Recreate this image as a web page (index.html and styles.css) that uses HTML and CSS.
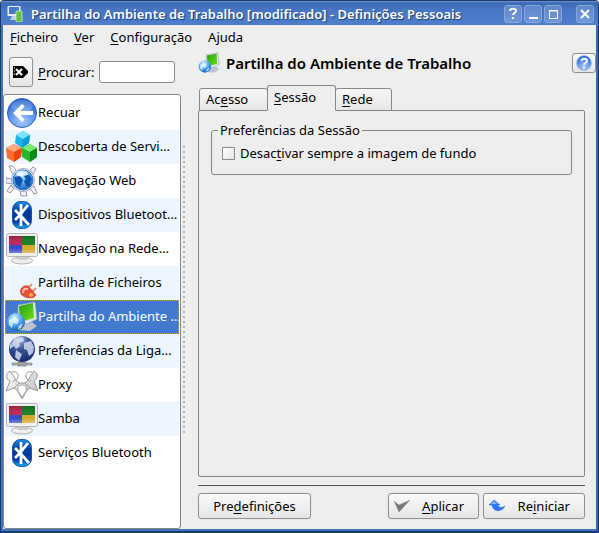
FILE: index.html
```html
<!DOCTYPE html>
<html lang="pt">
<head>
<meta charset="utf-8">
<title>Partilha do Ambiente de Trabalho - Definições Pessoais</title>
<link rel="stylesheet" href="styles.css">
</head>
<body>
<svg class="defs" aria-hidden="true">
  <defs>
    <radialGradient id="blue" cx=".5" cy=".8" r=".75"><stop offset="0" stop-color="#a4caff"/><stop offset=".6" stop-color="#5b93ec"/><stop offset="1" stop-color="#2460cc"/></radialGradient>
    <linearGradient id="bt" x1="0" y1="0" x2="0" y2="1"><stop offset="0" stop-color="#1c8fe8"/><stop offset=".35" stop-color="#003a9c"/><stop offset=".75" stop-color="#0039a0"/><stop offset="1" stop-color="#16b4f6"/></linearGradient>
    <linearGradient id="green" x1="0" y1="0" x2="1" y2="1"><stop offset="0" stop-color="#2a9c10"/><stop offset="1" stop-color="#6ee31c"/></linearGradient>
    <radialGradient id="globe" cx=".4" cy=".25" r=".8"><stop offset="0" stop-color="#d5f0ff"/><stop offset=".5" stop-color="#55aaf0"/><stop offset="1" stop-color="#1557b5"/></radialGradient>
    <radialGradient id="dark" cx=".4" cy=".15" r=".9"><stop offset="0" stop-color="#a9b8dd"/><stop offset=".4" stop-color="#3c5498"/><stop offset="1" stop-color="#132a6c"/></radialGradient>
    <linearGradient id="silver" x1="0" y1="0" x2="1" y2="1"><stop offset="0" stop-color="#fff"/><stop offset="1" stop-color="#b9b9c0"/></linearGradient>
    <linearGradient id="shade" x1="0" y1="0" x2="0" y2="1"><stop offset="0" stop-color="#000" stop-opacity=".2"/><stop offset=".7" stop-color="#fff" stop-opacity="0"/><stop offset="1" stop-color="#fff" stop-opacity=".3"/></linearGradient>
    <symbol id="i-back" viewBox="0 0 32 32"><circle cx="16" cy="16" r="14.5" fill="url(#blue)" stroke="#3162ba"/><ellipse cx="16" cy="9" rx="11" ry="6" fill="#fff" opacity=".18"/><path d="M16 7 7 16l9 9 2.600-2.600-4.300-4.400H27v-4H14.300l4.300-4.400z" fill="#fff"/></symbol>
    <symbol id="i-cubes" viewBox="0 0 32 32"><path d="m17 0 7 4-1 8-7 5-7-5 1-8z" fill="#1fb3e8"/><path d="m17 0 7 4-7 4-7-4z" fill="#7be3ff"/><path d="m17 8 7-4-1 8-7 5z" fill="#079bd8"/><path d="m8 13 8 4-1 9-7 5-7-4-1-10z" fill="#ff6c2c"/><path d="m8 13 8 4-8 4-8-4z" fill="#ffaa7c"/><path d="m8 21 8-4-1 9-7 5z" fill="#ea4704"/><path d="m24 13 7 4v9l-7 5-8-5V17z" fill="#22b82c"/><path d="m24 13 7 4-7 4-8-4z" fill="#79ea72"/><path d="m24 21 7-4v9l-7 5z" fill="#078b13"/></symbol>
    <symbol id="i-web" viewBox="0 0 32 32">
      <g fill="#eceef4" stroke="#8b8f9e" stroke-width=".9"><path d="M3 1c5-1 7 3 7 6l-3 3c-1-3-3-5-3-7z"/><path d="m0 13 6 1v5l-6-1zM5 20l3 4-4 4-3-2zM14 26h6l1 5h-6zM24 23l4-2 3 7-3 1zM24 5l3-3 3 2-3 5z"/></g>
      <circle cx="17" cy="15" r="11.500" fill="#fff" stroke="#a1a8b8"/><circle cx="17" cy="15" r="10" fill="url(#globe)" stroke="#2f73c8"/><path d="m8 12 6-1 3 4-3 7-4-3zm9-2h6l3 4-2 3 0 4-4 0-2-5 2-2z" fill="#0b54ad"/><ellipse cx="16" cy="8.500" rx="6" ry="3" fill="#fff" opacity=".65"/></symbol>
    <symbol id="i-bt" viewBox="0 0 32 32"><rect x="6.500" y="2.500" width="19" height="27" rx="8" fill="url(#bt)" stroke="#1553ad"/><path d="M15 5v22M22 6 14 16l9 10M9 11l5 5-5 5" fill="none" stroke="#fff" stroke-width="2.800"/></symbol>
    <symbol id="i-screen" viewBox="0 0 32 32"><ellipse cx="16" cy="27.500" rx="10.500" ry="3.500" fill="#eee" stroke="#b0b0b0"/><path d="M12 22h9l1 5H11z" fill="#ccc"/><rect x=".5" y=".5" width="31" height="23" rx="2" fill="#efefef" stroke="#b5b5b5"/><path d="M3 3h13v9H3z" fill="#bd2753"/><path d="M16 3h13v9H16z" fill="#168023"/><path d="M3 12h13v8H3z" fill="#3548ca"/><path d="M16 12h13v8H16z" fill="#d4a72a"/><path d="M3 3h26v17H3z" fill="url(#shade)"/></symbol>
    <symbol id="i-plug" viewBox="0 0 32 32"><path d="m22 21 4-4m0 8 4-4" stroke="#e09078" stroke-width="2"/><path d="M15 27c-2-5 2-9 7-8l8 9c-2 4-11 4-15-1z" fill="#e65238" stroke="#c43a26" stroke-width=".7"/><path d="M17 26c0-4 2-5 5-4" fill="none" stroke="#ffc1af" stroke-width="2"/><circle cx="25" cy="28" r="2" fill="#f3b33f"/></symbol>
    <symbol id="i-share" viewBox="0 0 32 32"><path d="m11 23 15-2 5 4-7 5-11-1z" fill="#b9c3d3"/><path d="m12 4 17-3 2 17-10 5-9-3z" fill="#dce5ea" stroke="#8fa4ae" stroke-width=".7"/><path d="m13 5 14-3 1 15-14 4z" fill="url(#green)"/><circle cx="10" cy="21" r="9" fill="url(#globe)"/><path d="m3 19 6-3 4 3-2 4-4-1-1 5-3-3zm10 6 4-3-2 5-3 2z" fill="#edfaff" opacity=".75"/></symbol>
    <symbol id="i-network" viewBox="0 0 32 32"><path d="M6 28h20v2H6zM12 27h8v4h-8z" fill="#bbb" stroke="#6f6f6f" stroke-width=".6"/><circle cx="16" cy="14" r="13" fill="url(#dark)"/><path d="m4 10 5-7 8-1 1 4-5 2 1 3-4 3-2-3-4 3zm14-2 7-2 3 6-1 6-4 3-2-6-3-1zM10 15l6 4-3 7-4-4z" fill="#dce5f6" opacity=".8"/></symbol>
    <symbol id="i-proxy" viewBox="0 0 32 32"><path d="M4 2C-1 5 0 10 4 12L0 22l8-3 3 2 5 9 5-9 3-2 8 3-4-10c4-2 5-7 0-10l-6 9-3 3h-6l-3-3z" fill="url(#silver)" stroke="#97979d"/><path d="M6 3c8-2 8 8 1 9M26 3c-8-2-8 8-1 9M8 19l5-5m11 5-5-5" fill="none" stroke="#97979d"/><path d="m12 17 3-1h2l3 1v5l-4 6-4-6z" fill="#fff" stroke="#999" stroke-width=".7"/></symbol>
  </defs>
</svg>
<div class="window">
  <header class="titlebar">
    <svg class="icon16" viewBox="0 0 16 17"><rect x=".5" y="1" width="13" height="10" rx="1" fill="#e7edf6"/><path d="M2 2h10v7H2z" fill="#427cc5"/><path d="M5 11h5l2 4H3z" fill="#c3ccda"/><rect x="9" y="6" width="6" height="11" rx="1" fill="#63bd45" stroke="#d8efce" stroke-width=".8"/></svg>
    <h1>Partilha do Ambiente de Trabalho [modificado] - Definições Pessoais</h1>
    <div class="controls">
      <button aria-label="Ajuda da janela"><svg viewBox="0 0 16 16"><path d="M5 5c0-3 6-3 6 0 0 2-3 2-3 4m0 2v2" fill="none" stroke="#fff" stroke-width="2"/></svg></button>
      <button aria-label="Minimizar"><svg viewBox="0 0 16 16"><path d="M4 12h9" stroke="#fff" stroke-width="2"/></svg></button>
      <button aria-label="Maximizar"><svg viewBox="0 0 16 16"><path d="M4.500 4.500h8v8h-8zM4 5h9" fill="none" stroke="#fff"/></svg></button>
      <button class="close" aria-label="Fechar"><svg viewBox="0 0 16 16"><path d="m4 4 8 8m0-8-8 8" stroke="#fff" stroke-width="2"/></svg></button>
    </div>
  </header>
  <nav class="menu"><a href="#"><u>F</u>icheiro</a><a href="#"><u>V</u>er</a><a href="#"><u>C</u>onfiguração</a><a href="#">Ajuda</a></nav>
  <main class="content">
    <aside class="sidebar">
      <div class="search">
        <button class="button clear" aria-label="Limpar"><svg viewBox="0 0 16 12"><path d="M0 0h10l5 5v2l-5 5H0z"/><path d="m3 3 6 6m0-6L3 9" stroke="#fff" stroke-width="2"/><path d="M1 2h1M1 5h1M1 8h1" stroke="#fff"/></svg></button>
        <label for="search"><u>P</u>rocurar:</label>
        <input id="search" type="text">
      </div>
      <ul class="list">
        <li><a href="#"><svg><use href="#i-back"/></svg><span>Recuar</span></a></li>
        <li><a href="#"><svg><use href="#i-cubes"/></svg><span>Descoberta de Servi…</span></a></li>
        <li><a href="#"><svg><use href="#i-web"/></svg><span>Navegação Web</span></a></li>
        <li><a href="#"><svg><use href="#i-bt"/></svg><span>Dispositivos Bluetoot…</span></a></li>
        <li><a href="#"><svg><use href="#i-screen"/></svg><span>Navegação na Rede…</span></a></li>
        <li><a href="#"><svg><use href="#i-plug"/></svg><span>Partilha de Ficheiros</span></a></li>
        <li class="selected"><a href="#"><svg><use href="#i-share"/></svg><span>Partilha do Ambiente …</span></a></li>
        <li><a href="#"><svg><use href="#i-network"/></svg><span>Preferências da Liga…</span></a></li>
        <li><a href="#"><svg><use href="#i-proxy"/></svg><span>Proxy</span></a></li>
        <li><a href="#"><svg><use href="#i-screen"/></svg><span>Samba</span></a></li>
        <li><a href="#"><svg><use href="#i-bt"/></svg><span>Serviços Bluetooth</span></a></li>
      </ul>
    </aside>
    <div class="splitter"></div>
    <section class="module">
      <div class="heading">
        <svg><use href="#i-share"/></svg>
        <h2>Partilha do Ambiente de Trabalho</h2>
        <button class="button help" aria-label="Ajuda"><svg viewBox="0 0 16 16"><circle cx="8" cy="8" r="7.500" fill="url(#blue)" stroke="#a9c3ee"/><path d="M5.500 6c0-3 5.500-3 5.500 0 0 2-3 1.500-3 4m0 1.500v2" fill="none" stroke="#fff" stroke-width="1.800"/></svg></button>
      </div>
      <div class="tabs" role="tablist">
        <button role="tab" class="tab">Ac<u>e</u>sso</button>
        <button role="tab" class="tab active" aria-selected="true"><u>S</u>essão</button>
        <button role="tab" class="tab last"><u>R</u>ede</button>
      </div>
      <div class="panel" role="tabpanel">
        <fieldset>
          <legend>Preferências da Sessão</legend>
          <label class="check"><input type="checkbox"><span>Desac<u>t</u>ivar sempre a imagem de fundo</span></label>
        </fieldset>
      </div>
      <footer class="actions">
        <button class="button defaults"><span>Pre<u>d</u>efinições</span></button>
        <button class="button apply"><svg viewBox="0 0 16 16"><path d="m0 3 5 4 11-5L5 14z" fill="#777" stroke="#999" stroke-width=".5"/></svg><span><u>A</u>plicar</span></button>
        <button class="button reset"><svg viewBox="0 0 16 16"><path d="M5 2 0 7h3c1 7 9 8 13 1-3 2-7 2-7-1h2z" fill="#2a78ff" stroke="#1760df" stroke-width=".5"/><path d="M5 3 2 6h6z" fill="#8ab8ff"/></svg><span>Re<u>i</u>niciar</span></button>
      </footer>
    </section>
  </main>
</div>
</body>
</html>
```

FILE: styles.css
```css
* { box-sizing: border-box; }
body { margin: 0; background: #fff; color: #000; font: 13px/18px "Noto Sans", sans-serif; }
button, input { font: inherit; color: inherit; margin: 0; padding: 0; }
a { color: inherit; text-decoration: none; }
u { text-underline-offset: 2px; text-decoration-thickness: 1px; text-decoration-skip-ink: none; }
svg { display: block; flex: none; }
.defs { position: absolute; width: 0; height: 0; }
.window {
  display: flex; flex-direction: column; min-height: 100vh;
  background: #eee; border: 1px solid #1d3869; border-width: 1px 1px 2px;
  border-radius: 4px 4px 0 0; box-shadow: inset 2px 0 #4474c0, inset -2px 0 #3667b5, inset 0 -2px #4474c0;
}
.titlebar {
  display: flex; align-items: center; height: 24px; padding: 1px 4px 0 6px;
  border-radius: 3px 3px 0 0; color: #fff;
  background: linear-gradient(#7398d4, #3c69b2 2px, #4676c3 8px, #4f7fca);
}
.icon16 { width: 16px; height: 17px; }
h1 { margin: 0 0 0 8px; font-size: 13px; line-height: 18px; font-weight: 600; flex: 1; white-space: nowrap; text-shadow: 1px 1px 1px #1b3c75; }
.controls { display: flex; gap: 2px; }
.controls button { width: 18px; height: 18px; border: 1px solid #88a7da; border-radius: 3px; background: linear-gradient(#5f87c9, #6f97d9); }
.controls svg { width: 16px; height: 16px; }
.controls .close { margin-left: 12px; }
.menu { display: flex; gap: 16px; height: 25px; padding: 3px 9px; }
.content { display: flex; flex: 1; padding: 0 2px 2px; }
.sidebar { display: flex; flex-direction: column; width: 178px; }
.search { display: flex; align-items: center; gap: 5px; height: 44px; padding: 3px 6px 3px; }
.search input { flex: 1; min-width: 0; height: 22px; padding: 0 4px; border: 1px solid #888; border-radius: 3px; background: #fff; }
.button {
  display: flex; align-items: center; border: 1px solid #919191; border-radius: 3px;
  background: linear-gradient(#fafafa, #e5e5e5); box-shadow: 0 0 1px #c4c4c4;
}
.clear { width: 24px; height: 30px; justify-content: center; }
.clear svg { width: 16px; height: 12px; }
.list { flex: 1; margin: 0; padding: 1px; list-style: none; background: #fff; border: 1px solid #858585; border-radius: 3px; }
.list li { height: 34px; }
.list li:nth-child(even) { background: #edf5ff; }
.list a { display: flex; align-items: center; height: 34px; padding: 0 1px; white-space: nowrap; }
.list span { padding-bottom: 2px; }
.list svg { width: 32px; height: 32px; }
.list .selected { background: #417acd; color: #fff; }
.selected a { outline: 1px dotted #d89b44; outline-offset: -1px; }
.splitter {
  align-self: center; width: 2px; height: 288px; margin: 0 13px 0 2px;
  background: repeating-linear-gradient(#b4b4b4 0 2px, transparent 2px 5px);
}
.module { display: flex; flex: 1; flex-direction: column; min-width: 0; }
.heading { display: flex; align-items: center; height: 25px; gap: 6px; }
.heading > svg { width: 22px; height: 22px; }
h2 { flex: 1; margin: 0; font-size: 15px; line-height: 20px; font-weight: 600; }
.help { width: 24px; height: 20px; justify-content: center; }
.help svg { width: 16px; height: 16px; }
.tabs { display: flex; align-items: flex-end; height: 36px; margin: 0 12px -1px 1px; }
.tab { height: 23px; width: 69px; padding: 0 0 2px 6px; text-align: left; border: 1px solid #888; border-radius: 3px 3px 0 0; background: linear-gradient(#f7f7f7, #e6e6e6); }
.tab.active { height: 26px; margin: 0 -1px; padding-bottom: 3px; background: #eee; border-bottom-color: #eee; z-index: 1; }
.tab.last { width: 57px; }
.panel { flex: 1; margin-right: 11px; padding: 10px 12px; border: 1px solid #858585; border-radius: 2px; }
fieldset { min-width: 0; margin: 0; padding: 2px 10px 9px; border: 1px solid #858585; border-radius: 3px; }
legend { margin-left: -4px; padding: 0 2px; }
.check { display: flex; align-items: center; gap: 5px; height: 24px; }
.check input { appearance: none; width: 13px; height: 13px; border: 1px solid #8d8d8d; background: linear-gradient(135deg, #fff, #e5e5e5); }
.actions { display: flex; gap: 4px; margin: 8px 11px 10px 0; padding-top: 7px; border-top: 1px solid #555; }
.actions .button { height: 26px; padding: 0 14px 0 5px; justify-content: space-between; }
.actions svg { width: 16px; height: 16px; }
.actions .defaults { width: 113px; margin-right: auto; padding: 0; justify-content: center; }
.actions .apply { width: 91px; }
.actions .reset { width: 102px; }
```
